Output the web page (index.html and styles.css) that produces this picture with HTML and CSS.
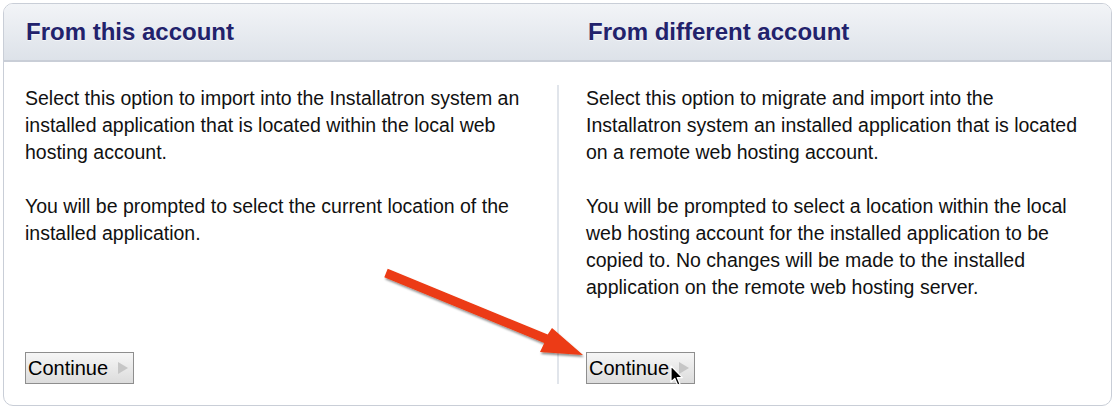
FILE: index.html
```html
<!DOCTYPE html>
<html>
<head>
  <title>Import</title>
  <link rel="stylesheet" href="styles.css">
</head>
<body>
  <div class="panel">
    <div class="panel-head">
      <h2 class="col-left">From this account</h2>
      <h2 class="col-right">From different account</h2>
    </div>
    <div class="panel-body">
      <div class="option col-left">
        <p>Select this option to import into the Installatron system an installed application that is located within the local web hosting account.</p>
        <p>You will be prompted to select the current location of the installed application.</p>
        <button class="continue">Continue <span class="play"></span></button>
      </div>
      <div class="option col-right">
        <p>Select this option to migrate and import into the Installatron system an installed application that is located on a remote web hosting account.</p>
        <p>You will be prompted to select a location within the local web hosting account for the installed application to be copied to. No changes will be made to the installed application on the remote web hosting server.</p>
        <button class="continue">Continue <span class="play"></span></button>
      </div>
    </div>
  </div>

  <!-- annotation drawn over the screenshot -->
  <svg class="arrow" width="1116" height="409" viewBox="0 0 1116 409">
    <defs>
      <filter id="shade" x="-10%" y="-10%" width="120%" height="130%">
        <feDropShadow dx="1" dy="2" stdDeviation="1.2" flood-color="#000" flood-opacity="0.45"/>
      </filter>
    </defs>
    <polygon filter="url(#shade)" fill="#ec3a12"
      points="387.7,268.8 547.7,334.5 552,328 583,355 540,352 544.3,342.9 384.3,277.2"/>
  </svg>
  <svg class="cursor" width="14" height="22" viewBox="0 0 14 22">
    <path d="M1 1 L1 17 L4.8 13.4 L7.6 20 L10 19 L7.2 12.6 L12.4 12.6 Z" fill="#000" stroke="#fff" stroke-width="1.2" stroke-linejoin="round"/>
  </svg>
</body>
</html>
```

FILE: styles.css
```css
:root {
  --border: #c9ced7;
  --title: #22226c;
  --divider: #e1e5eb;
}

html, body {
  margin: 0;
  padding: 0;
  background: #ffffff;
}

body {
  padding: 3px 4px 3px 3px;
  font-family: "Liberation Sans", Arial, sans-serif;
  color: #111;
}

.panel {
  border: 1px solid var(--border);
  border-radius: 10px;
  overflow: hidden;
  height: 403px;
  box-sizing: border-box;
  display: flex;
  flex-direction: column;
}

.panel-head {
  display: grid;
  grid-template-columns: 553px 1fr;
  height: 56px;
  align-items: center;
  background: linear-gradient(#f2f4f7, #dde2e9);
  border-bottom: 2px solid var(--border);
}

.panel-head h2 {
  margin: 0;
  font-size: 24px;
  font-weight: bold;
  color: var(--title);
  text-shadow: 0 1px 0 rgba(255, 255, 255, 0.6);
}

.panel-head .col-left {
  padding-left: 22px;
}

.panel-head .col-right {
  padding-left: 31px;
}

.panel-body {
  flex: 1;
  display: grid;
  grid-template-columns: 553px 1fr;
  padding: 23px 0 21px;
}

.option {
  display: flex;
  flex-direction: column;
  align-items: flex-start;
  font-size: 19.5px;
  line-height: 27px;
}

.option p {
  margin: 0 0 27px;
}

.option.col-left {
  padding: 0 27px 0 21px;
}

.option.col-right {
  border-left: 2px solid var(--divider);
  padding: 0 19px 0 27px;
}

.continue {
  margin-top: auto;
  display: flex;
  align-items: center;
  gap: 10px;
  height: 32px;
  padding: 0 5px 0 2px;
  font-family: "Liberation Sans", Arial, sans-serif;
  font-size: 20px;
  color: #000;
  background: linear-gradient(#f6f6f6, #dcdcdc);
  border: 1px solid #8e8e8e;
  border-radius: 0;
}

.play {
  width: 0;
  height: 0;
  border-top: 6px solid transparent;
  border-bottom: 6px solid transparent;
  border-left: 10px solid #c6c6c6;
}

.arrow {
  position: absolute;
  left: 0;
  top: 0;
  pointer-events: none;
}

.cursor {
  position: absolute;
  left: 670px;
  top: 365px;
}
```
